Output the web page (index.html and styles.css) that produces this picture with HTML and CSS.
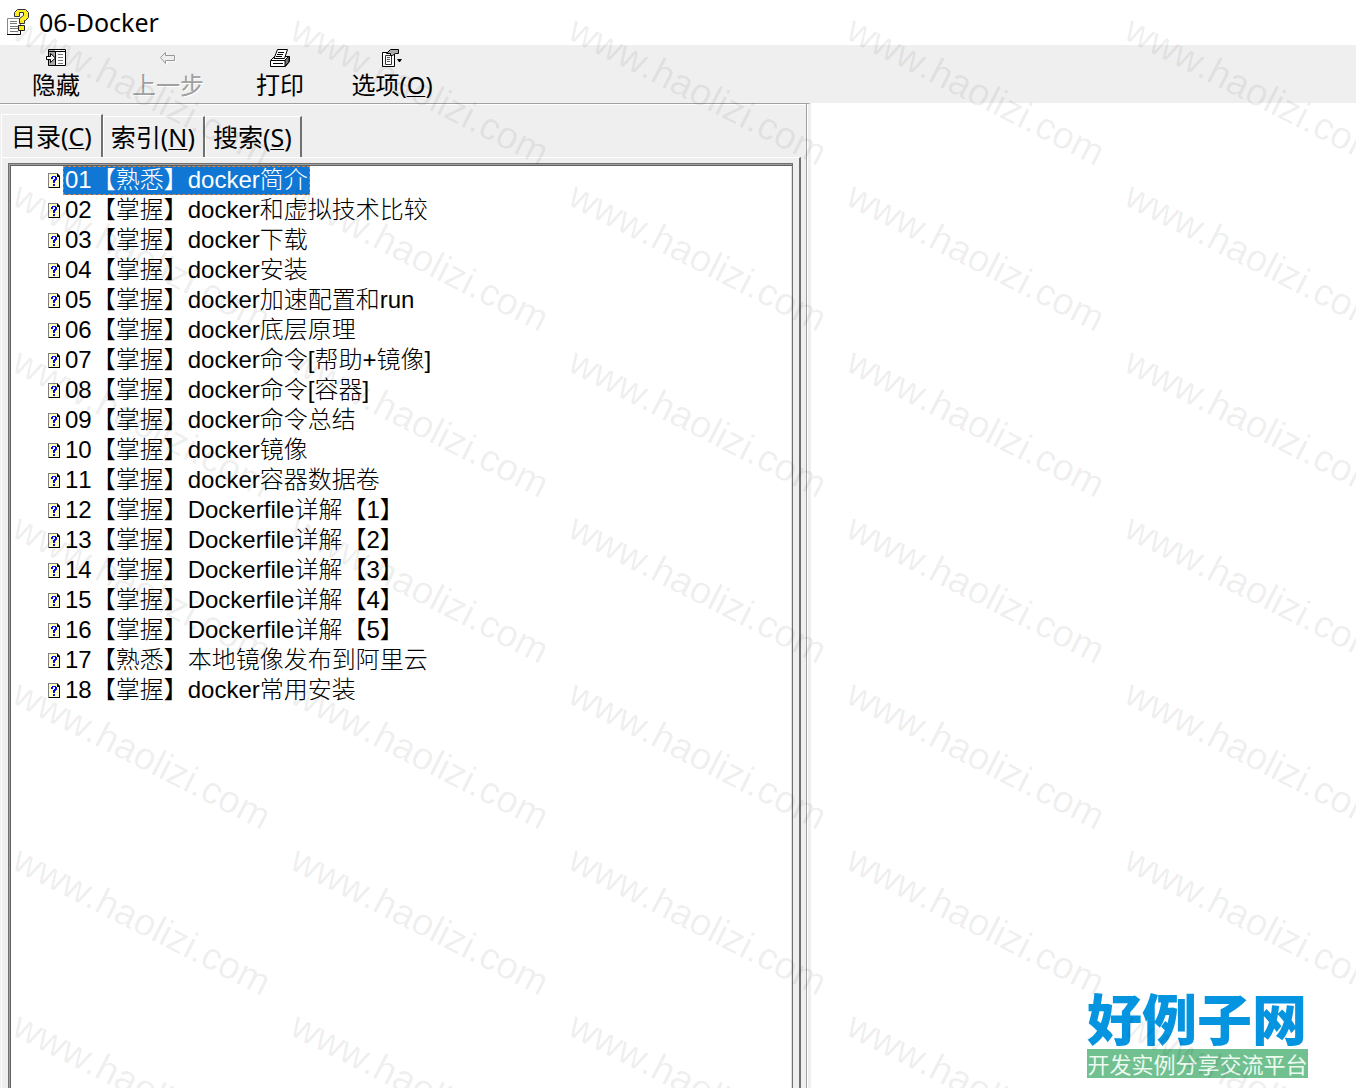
FILE: index.html
```html
<!DOCTYPE html>
<html lang="zh-CN">
<head>
<meta charset="utf-8">
<title>06-Docker</title>
<link rel="stylesheet" href="styles.css">
</head>
<body>
<svg class="defs" aria-hidden="true">
  <defs>
    <symbol id="topic" viewBox="0 0 12 15">
      <path d="M0 0h9l3 3v12H0z" fill="#808080"/>
      <path d="M9 0l3 3v12H1v-1h10V4H9z" fill="#000"/>
      <path d="M1 1h8v3h2v10H1z" fill="#ffffc0"/>
      <path d="M3 6V4h1V3h4v1h1v3H8v1H7v2H5V7h1V6h1V4H5v2zM5 11h2v2H5z" fill="#0000ff"/>
    </symbol>
    <text id="mark" transform="rotate(27)" class="mark">www.haolizi.com</text>
    <g id="mark-row">
      <use href="#mark" x="0"/>
      <use href="#mark" transform="translate(278 0)"/>
      <use href="#mark" transform="translate(556 0)"/>
      <use href="#mark" transform="translate(834 0)"/>
      <use href="#mark" transform="translate(1112 0)"/>
    </g>
  </defs>
</svg>

<header class="titlebar">
  <svg class="app-icon" width="24" height="28" viewBox="0 0 24 28" aria-hidden="true">
    <path d="M.5 10.500h13v16H.5z" fill="#fff" stroke="#888"/>
    <path d="M13.500 20v6.500H0" fill="none" stroke="#000"/>
    <path d="M3 13.500h7M3 15.500h7M3 18.500h8M3 20.500h8M3 23.500h8" stroke="#777"/>
    <path d="M7.500 8.500v-4l3-3h8l3 3v5l-3 3h-1v3h-5v-5l4-3v-3h-4v4z" fill="#ffee20" stroke="#333"/>
    <path d="M11.500 17.500h6v5h-6z" fill="#ffee20" stroke="#222"/>
  </svg>
  <h1 class="title">06-Docker</h1>
</header>

<div class="toolbar" role="toolbar">
  <button class="tool" type="button">
    <svg width="20" height="18" viewBox="0 0 20 18" aria-hidden="true">
      <path d="M2.500 .5h17v16h-17z" fill="#fff" stroke="#000"/>
      <path d="M3 1h6v15H3z" fill="#aaa"/><path d="M2 2.500h17M9.500 3v14" stroke="#000"/>
      <path d="M12 5.500h5M12 8.500h5M12 11.500h5M12 14.500h5" stroke="#777"/>
      <path d="M0.500 7.500h4v-3l5 4.500-5 4.500v-3h-4z" fill="#fff" stroke="#000"/>
    </svg>
    <span>隐藏</span>
  </button>
  <button class="tool" type="button" disabled>
    <svg width="20" height="18" viewBox="0 0 20 18" aria-hidden="true">
      <path d="M3.500 9.500l6-6v4h8v5h-8v4z" fill="#fff"/>
      <path d="M2.500 8.500l5-5v3h9v5h-9v3z" fill="#eee" stroke="#999"/>
    </svg>
    <span>上一步</span>
  </button>
  <button class="tool" type="button">
    <svg width="20" height="18" viewBox="0 0 20 18" aria-hidden="true">
      <path d="M0.500 11.500l4-4h15v5l-4 5h-15z" fill="#fff" stroke="#000"/>
      <path d="M15 11l4-4v6l-4 4z" fill="#777" stroke="#000"/>
      <path d="M4 9.500L7.500.5h10l-3 9z" fill="#fff" stroke="#000"/>
      <path d="M8 3.500h6M7 5.500h6M6 7.500h6M1 11.500h14M3 14.500h10" stroke="#000"/>
    </svg>
    <span>打印</span>
  </button>
  <button class="tool" type="button">
    <svg width="20" height="18" viewBox="0 0 20 18" aria-hidden="true">
      <path d="M.5 3.500h12v14H.5z" fill="#fff" stroke="#000"/>
      <path d="M3.500 6.500h6v9h-6z" fill="#fff" stroke="#333"/>
      <path d="M5 8.500h3M5 10.500h3M5 12.500h3" stroke="#555"/>
      <path d="M4.500 4.500l4-4h8v4h-3l-3 2h-2v-2z" fill="#aaa" stroke="#000"/>
      <path d="M15 10h5l-2 3h-1z" fill="#000"/>
    </svg>
    <span>选项(<u>O</u>)</span>
  </button>
</div>

<main class="workspace">
  <section class="navigator">
    <div class="tabs" role="tablist">
      <button class="tab tab-active" type="button" role="tab" aria-selected="true">目录(<u>C</u>)</button>
      <button class="tab" type="button" role="tab" aria-selected="false">索引(<u>N</u>)</button>
      <button class="tab" type="button" role="tab" aria-selected="false">搜索(<u>S</u>)</button>
    </div>
    <div class="page">
      <ul class="topics">
        <li><svg class="topic-icon"><use href="#topic"/></svg><a class="selected" href="#01">01【熟悉】docker简介</a></li>
        <li><svg class="topic-icon"><use href="#topic"/></svg><a href="#02">02【掌握】docker和虚拟技术比较</a></li>
        <li><svg class="topic-icon"><use href="#topic"/></svg><a href="#03">03【掌握】docker下载</a></li>
        <li><svg class="topic-icon"><use href="#topic"/></svg><a href="#04">04【掌握】docker安装</a></li>
        <li><svg class="topic-icon"><use href="#topic"/></svg><a href="#05">05【掌握】docker加速配置和run</a></li>
        <li><svg class="topic-icon"><use href="#topic"/></svg><a href="#06">06【掌握】docker底层原理</a></li>
        <li><svg class="topic-icon"><use href="#topic"/></svg><a href="#07">07【掌握】docker命令[帮助+镜像]</a></li>
        <li><svg class="topic-icon"><use href="#topic"/></svg><a href="#08">08【掌握】docker命令[容器]</a></li>
        <li><svg class="topic-icon"><use href="#topic"/></svg><a href="#09">09【掌握】docker命令总结</a></li>
        <li><svg class="topic-icon"><use href="#topic"/></svg><a href="#10">10【掌握】docker镜像</a></li>
        <li><svg class="topic-icon"><use href="#topic"/></svg><a href="#11">11【掌握】docker容器数据卷</a></li>
        <li><svg class="topic-icon"><use href="#topic"/></svg><a href="#12">12【掌握】Dockerfile详解【1】</a></li>
        <li><svg class="topic-icon"><use href="#topic"/></svg><a href="#13">13【掌握】Dockerfile详解【2】</a></li>
        <li><svg class="topic-icon"><use href="#topic"/></svg><a href="#14">14【掌握】Dockerfile详解【3】</a></li>
        <li><svg class="topic-icon"><use href="#topic"/></svg><a href="#15">15【掌握】Dockerfile详解【4】</a></li>
        <li><svg class="topic-icon"><use href="#topic"/></svg><a href="#16">16【掌握】Dockerfile详解【5】</a></li>
        <li><svg class="topic-icon"><use href="#topic"/></svg><a href="#17">17【熟悉】本地镜像发布到阿里云</a></li>
        <li><svg class="topic-icon"><use href="#topic"/></svg><a href="#18">18【掌握】docker常用安装</a></li>
      </ul>
    </div>
  </section>
  <section class="viewer">
    <div class="brand">
      <strong class="brand-name">好例子网</strong>
      <span class="brand-line">开发实例分享交流平台</span>
    </div>
  </section>
</main>

<svg class="watermark" aria-hidden="true">
  <g transform="translate(10 38)">
    <use href="#mark-row"/>
    <use href="#mark-row" transform="translate(0 166)"/>
    <use href="#mark-row" transform="translate(0 332)"/>
    <use href="#mark-row" transform="translate(0 498)"/>
    <use href="#mark-row" transform="translate(0 664)"/>
    <use href="#mark-row" transform="translate(0 830)"/>
    <use href="#mark-row" transform="translate(0 996)"/>
  </g>
</svg>
</body>
</html>
```
FILE: styles.css
```css
* { box-sizing: border-box; }

body {
  margin: 0;
  min-height: 100vh;
  display: flex;
  flex-direction: column;
  position: relative;
  background: #fff;
  color: #000;
  font-family: "Noto Sans", "Noto Sans CJK SC", sans-serif;
  font-size: 24px;
}

button {
  border: 0;
  margin: 0;
  padding: 0;
  background: none;
  color: inherit;
  font: inherit;
}

u { text-underline-offset: 2px; text-decoration-thickness: 1px; }

.defs { position: absolute; width: 0; height: 0; }

.titlebar {
  height: 45px;
  display: flex;
  align-items: center;
  gap: 8px;
  padding: 0 7px 2px;
}

.title { margin: 0; font-size: 25px; font-weight: 400; }

.toolbar {
  height: 58px;
  display: flex;
  background: #efefef;
}

.tool {
  width: 112px;
  display: flex;
  flex-direction: column;
  align-items: center;
  padding-top: 4px;
  line-height: 36px;
}

.tool svg { flex: none; }
.tool:disabled { color: #a0a0a0; text-shadow: 1px 1px #fff; }

.workspace {
  flex: 1;
  display: grid;
  grid-template-columns: 811fr 545fr;
}

.navigator {
  display: flex;
  flex-direction: column;
  background: #efefef;
  border-top: 1px solid #a0a0a0;
  border-right: 3px solid #efefef;
  box-shadow: inset -1px 0 #fff, inset -2px 0 #a0a0a0, inset 0 1px #fff;
  padding: 10px 7px 0 1px;
}

.tabs { display: flex; height: 43px; }

.tab {
  height: 41px;
  margin-top: 2px;
  padding: 0 8px 0 7px;
  border-top: 1px solid #fff;
  border-left: 1px solid #fff;
  border-right: 2px solid #707070;
  font-size: 25px;
  line-height: 40px;
}

.tab-active {
  height: 43px;
  margin-top: 0;
  padding: 0 9px;
}

.page {
  flex: 1;
  display: flex;
  padding: 5px 6px 0;
  border-top: 1px solid #fff;
  border-left: 1px solid #fff;
  border-right: 2px solid #707070;
}

.topics {
  flex: 1;
  margin: 0;
  padding: 1px 0 0 2px;
  list-style: none;
  background: #fff;
  border: 1px solid #707070;
  border-bottom: 0;
  box-shadow: inset 1px 1px #a0a0a0, inset 2px 2px #606060, inset -1px 0 #e0e0e0;
  font: 300 24px/30px "Liberation Sans", "Noto Sans CJK SC", sans-serif;
  font-kerning: none;
}

.topics li {
  height: 30px;
  display: flex;
  align-items: center;
  gap: 3px;
  padding-left: 37px;
}

.topics a {
  height: 29px;
  line-height: 25px;
  padding: 0 1px;
  border: 1px solid transparent;
  color: #000;
  text-decoration: none;
  white-space: nowrap;
}

.topics .selected {
  background: #1078d4;
  border: 1px dashed #e08030;
  color: #fff;
}

.topic-icon { width: 12px; height: 15px; flex: none; }

.viewer {
  display: flex;
  align-items: flex-end;
  justify-content: flex-end;
  padding: 0 48px 10px 0;
}

.brand {
  width: 221px;
  display: flex;
  flex-direction: column;
  gap: 4px;
  font-family: "Noto Sans CJK SC", sans-serif;
}

.brand-name {
  color: #0494e0;
  font-size: 55px;
  font-weight: 900;
  line-height: 58px;
}

.brand-line {
  background: #70c090;
  color: #eefaf0;
  font-size: 22px;
  line-height: 29px;
  text-align: center;
  white-space: nowrap;
}

.watermark {
  position: absolute;
  inset: 0;
  width: 100%;
  height: 100%;
  pointer-events: none;
}

.mark {
  font-family: "Liberation Sans", sans-serif;
  font-size: 38px;
  font-kerning: none;
  fill: #000;
  fill-opacity: 0.07;
}
```
